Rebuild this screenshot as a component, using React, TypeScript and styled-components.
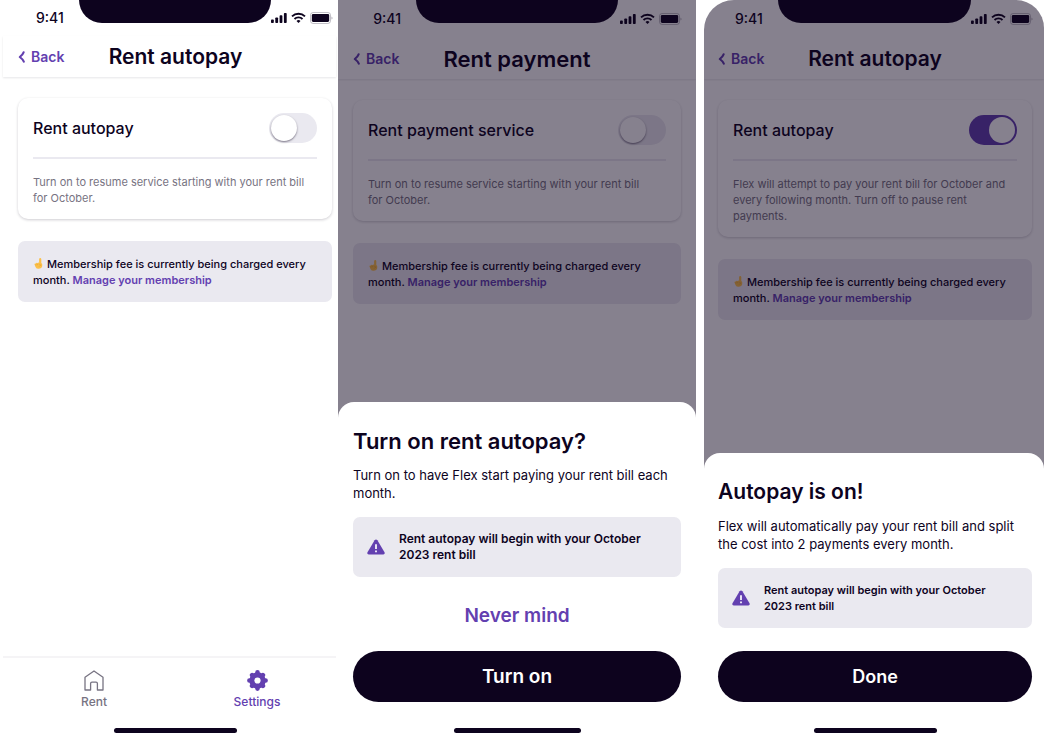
import React from "react";
import styled, { createGlobalStyle } from "styled-components";

const ink = "#0d031e";
const purple = "#6340b0";
const muted = "#777382";
const mist = "#eae9f0";

const GlobalStyle = createGlobalStyle`
  *, *::before, *::after { box-sizing: border-box; }
  body {
    margin: 0;
    background: #fff;
    color: ${ink};
    font-family: Inter, "Liberation Sans", sans-serif;
  }
  h1, h2, h3, p { margin: 0; }
  button { font-family: inherit; border: 0; cursor: pointer; }
`;

const Stage = styled.div`
  display: grid;
  grid-template-columns: 338fr 358fr 348fr;
  min-height: 100vh;
`;

const Phone = styled.section<{ $kind: "first" | "middle" | "last" }>`
  position: relative;
  display: flex;
  flex-direction: column;
  overflow: hidden;
  background: #fff;
  margin-left: ${(p) => (p.$kind === "last" ? "8px" : "0")};
  border-radius: ${(p) => (p.$kind === "last" ? "30px 28px 0 0" : "0")};
`;

const StatusBar = styled.div<{ $columns: string; $height: number }>`
  display: grid;
  grid-template-columns: ${(p) => p.$columns};
  height: ${(p) => p.$height}px;
`;

const Time = styled.span`
  align-self: center;
  justify-self: end;
  padding-right: 15px;
  font-size: 14px;
  line-height: 16px;
  font-weight: 500;
`;

const Notch = styled.div`
  height: 23px;
  border-radius: 0 0 24px 24px;
  background: ${ink};
`;

const Signals = styled.div<{ $end: number }>`
  display: flex;
  align-items: center;
  align-self: center;
  justify-content: flex-end;
  gap: 4px;
  padding-right: ${(p) => p.$end}px;
  svg { display: block; flex: none; }
`;

const Header = styled.header<{ $inset?: boolean; $lead: number }>`
  display: grid;
  align-items: center;
  height: 41px;
  margin: ${(p) => (p.$inset ? "0 2px 0 3px" : "0")};
  padding-left: ${(p) => p.$lead}px;
  box-shadow: 0 1px 2px rgba(13, 3, 30, 0.1);
  > * { grid-area: 1 / 1; }
`;

const Back = styled.button`
  display: flex;
  align-items: center;
  justify-self: start;
  gap: 5px;
  padding: 0;
  background: none;
  color: ${purple};
  font-size: 14px;
  line-height: 20px;
  font-weight: 600;
`;

const ScreenTitle = styled.h1<{ $lead: number; $large?: boolean }>`
  justify-self: center;
  padding-right: ${(p) => p.$lead}px;
  font-size: ${(p) => (p.$large ? 22 : 21)}px;
  line-height: 28px;
  font-weight: 600;
`;

const Content = styled.main<{ $left: number; $right: number }>`
  display: flex;
  flex-direction: column;
  flex: 1;
  gap: 22px;
  padding: 21px ${(p) => p.$right}px 0 ${(p) => p.$left}px;
`;

const Card = styled.div`
  padding: 15px 15px 13px;
  border-radius: 10px;
  background: #fff;
  box-shadow: 0 1px 3px rgba(13, 3, 30, 0.2);
`;

const CardRow = styled.label`
  display: flex;
  align-items: center;
  justify-content: space-between;
  padding-bottom: 14px;
  border-bottom: 2px solid ${mist};
  font-size: 16px;
  line-height: 20px;
  font-weight: 500;
`;

const Switch = styled.input`
  appearance: none;
  flex: none;
  width: 48px;
  height: 30px;
  margin: 0;
  padding: 2px;
  border-radius: 15px;
  background: ${mist};
  &::before {
    content: "";
    display: block;
    width: 26px;
    height: 26px;
    border-radius: 50%;
    background: #fff;
    box-shadow: 0 1px 2px rgba(13, 3, 30, 0.5);
  }
  &:checked { background: ${purple}; }
  &:checked::before { margin-left: auto; box-shadow: none; }
`;

const Hint = styled.p`
  padding: 15px 10px 0 0;
  color: ${muted};
  font-size: 11px;
  line-height: 16px;
`;

const Banner = styled.p`
  padding: 15px 15px 14px;
  border-radius: 7px;
  background: ${mist};
  font-size: 11px;
  line-height: 16px;
  font-weight: 500;
  svg { vertical-align: -1px; margin: 0 4px 0 1px; }
`;

const TextLink = styled.a`
  color: ${purple};
  font-weight: 600;
  text-decoration: none;
`;

const TabBar = styled.nav`
  display: grid;
  grid-template-columns: 1fr 1fr;
  column-gap: 5px;
  height: 72px;
  margin: 0 2px 0 3px;
  padding: 12px 0 0 12px;
  border-top: 2px solid #f5f4f6;
`;

const Tab = styled.a<{ $active?: boolean }>`
  display: flex;
  flex-direction: column;
  align-items: center;
  gap: 3px;
  color: ${(p) => (p.$active ? purple : muted)};
  font-size: 12px;
  line-height: 16px;
  font-weight: 500;
  text-decoration: none;
`;

const HomeBar = styled.div<{ $wide?: boolean }>`
  flex: none;
  align-self: center;
  width: ${(p) => (p.$wide ? 127 : 123)}px;
  height: 5px;
  border-radius: 3px;
  background: ${ink};
`;

const Foot = styled.footer`
  display: flex;
  flex-direction: column;
  padding: 0 0 13px 13px;
`;

const Scrim = styled.div`
  position: absolute;
  inset: 0;
  display: flex;
  flex-direction: column;
  justify-content: flex-end;
  background: rgba(13, 3, 30, 0.5);
`;

const Sheet = styled.div<{ $left: number; $right: number }>`
  display: flex;
  flex-direction: column;
  padding: 27px ${(p) => p.$right}px 13px ${(p) => p.$left}px;
  border-radius: 16px 16px 0 0;
  background: #fff;
`;

const SheetTitle = styled.h2<{ $large?: boolean }>`
  font-size: ${(p) => (p.$large ? 22 : 21)}px;
  line-height: 24px;
  font-weight: 600;
`;

const SheetText = styled.p`
  padding: 13px 0 15px;
  font-size: 13px;
  line-height: 18px;
`;

const Notice = styled.div<{ $large?: boolean }>`
  display: flex;
  align-items: center;
  gap: 14px;
  padding: 14px 28px 14px 14px;
  border-radius: 7px;
  background: ${mist};
  font-size: ${(p) => (p.$large ? 12 : 11)}px;
  line-height: 16px;
  font-weight: 600;
  svg { flex: none; }
`;

const Actions = styled.div<{ $top: number }>`
  display: flex;
  flex-direction: column;
  gap: 15px;
  padding: ${(p) => p.$top}px 0 26px;
`;

const Action = styled.button<{ $primary?: boolean; $large?: boolean }>`
  height: ${(p) => (p.$primary ? 51 : 40)}px;
  border-radius: 26px;
  background: ${(p) => (p.$primary ? ink : "none")};
  color: ${(p) => (p.$primary ? "#fff" : purple)};
  font-size: ${(p) => (p.$large ? 19 : 18)}px;
  line-height: 24px;
  font-weight: 600;
`;

const StatusIcons = ({ end }: { end: number }) => (
  <Signals $end={end}>
    <svg width="16" height="12" viewBox="0 0 16 12" fill={ink} aria-hidden="true">
      <rect x="0" y="7.5" width="2.8" height="3.5" rx="0.8" />
      <rect x="4.3" y="5.5" width="2.8" height="5.5" rx="0.8" />
      <rect x="8.6" y="3.3" width="2.8" height="7.7" rx="0.8" />
      <rect x="12.9" y="1" width="2.8" height="10" rx="0.8" />
    </svg>
    <svg width="15" height="12" viewBox="0 0 15 12" fill="none" stroke={ink} strokeWidth="1.9" aria-hidden="true">
      <path d="M1 4.4a9.3 9.3 0 0 1 13 0" />
      <path d="M3.5 7a5.7 5.7 0 0 1 8 0" />
      <path d="M7.5 11 5.5 9a2.8 2.8 0 0 1 4 0z" fill={ink} stroke="none" />
    </svg>
    <svg width="23" height="12" viewBox="0 0 23 12" aria-hidden="true">
      <rect x="0.5" y="0.5" width="20" height="11" rx="2.6" fill="none" stroke={ink} strokeOpacity="0.25" />
      <rect x="1.8" y="2" width="17.4" height="8" rx="1.4" fill={ink} />
      <path d="M21.5 4.4v3.2q1-.5 1-1.6t-1-1.6z" fill={ink} fillOpacity="0.35" />
    </svg>
  </Signals>
);

const Chevron = () => (
  <svg width="8" height="12" viewBox="0 0 8 12" fill="none" stroke={purple} strokeWidth="2.1" strokeLinecap="round" strokeLinejoin="round" aria-hidden="true">
    <path d="M5.6 1.3Q4.8 3.6 1.8 6q3 2.2 4 4.7" />
  </svg>
);

const Finger = () => (
  <svg width="9" height="11" viewBox="0 0 9 11" aria-hidden="true">
    <path d="M5.1 4.9V1.3Q5.2.1 6.2.1t1.1 1.2V5l.9.9v2.3q-.3 2.4-3.2 2.6-2.7.1-3.5-1.9L.5 6.6q-.2-1.2.8-1.2l.6.2q0-.9.9-.9t.9.5q.2-.8.9-.8t.5.5z" fill="#fbc04a" />
    <path d="M2.1 6.2v1.2M3.7 5.9v1.3M5.2 6.1q1.5.2 1.5 1.4-1.2.1-1.7 1.1" fill="none" stroke="#df9a2b" strokeWidth="0.5" />
  </svg>
);

const Warning = () => (
  <svg width="18" height="18" viewBox="0 0 18 18" aria-hidden="true">
    <path d="M7.6 2.3q1.4-1.7 2.8 0l7.1 12q.8 1.9-1.2 2.2H1.7q-2-.3-1.2-2.2z" fill={purple} />
    <path d="M9 6.3v4.8M9 12.6v1.7" stroke="#fff" strokeWidth="1.7" />
  </svg>
);

const House = () => (
  <svg width="20" height="21" viewBox="0 0 20 21" fill="none" stroke={muted} strokeWidth="1.3" strokeLinejoin="round" aria-hidden="true">
    <path d="M10 1 19 7.2V20h-5.6v-6.4q0-1.4-1.4-1.4H8q-1.4 0-1.4 1.4V20H1V7.2z" />
  </svg>
);

const Gear = () => (
  <svg width="21" height="21" viewBox="0 0 21 21" aria-hidden="true">
    <g stroke={purple} strokeWidth="4.6" strokeLinecap="round">
      <path d="M10.5 2.4v16.2M2.4 10.5h16.2M5.1 5.1l10.8 10.8M15.9 5.1 5.1 15.9" />
    </g>
    <circle cx="10.5" cy="10.5" r="8.2" fill={purple} />
    <circle cx="10.5" cy="10.5" r="3.1" fill="#fff" />
  </svg>
);

type SettingsProps = {
  setting: string;
  hint: string;
  on?: boolean;
  left: number;
  right: number;
};

const Settings = ({ setting, hint, on, left, right }: SettingsProps) => (
  <Content $left={left} $right={right}>
    <Card>
      <CardRow>
        {setting}
        <Switch type="checkbox" role="switch" defaultChecked={on} />
      </CardRow>
      <Hint>{hint}</Hint>
    </Card>
    <Banner>
      <Finger />
      <span>Membership fee is currently being charged every</span>{" "}
      <span>month.</span>{" "}
      <TextLink href="#membership">Manage your membership</TextLink>
    </Banner>
  </Content>
);

const BeginNotice = ({ large }: { large?: boolean }) => (
  <Notice role="note" $large={large}>
    <Warning />
    <span>Rent autopay will begin with your October 2023 rent bill</span>
  </Notice>
);

export default function App() {
  return (
    <>
      <GlobalStyle />
      <Stage>
        <Phone $kind="first">
          <StatusBar $columns="79fr 193fr 66fr" $height={36}>
            <Time>9:41</Time>
            <Notch />
            <StatusIcons end={5} />
          </StatusBar>
          <Header $inset $lead={15}>
            <Back><Chevron />Back</Back>
            <ScreenTitle $lead={3}>Rent autopay</ScreenTitle>
          </Header>
          <Settings
            setting="Rent autopay"
            hint="Turn on to resume service starting with your rent bill for October."
            left={18}
            right={6}
          />
          <TabBar>
            <Tab href="#rent"><House />Rent</Tab>
            <Tab href="#settings" $active><Gear />Settings</Tab>
          </TabBar>
          <Foot><HomeBar /></Foot>
        </Phone>

        <Phone $kind="middle">
          <StatusBar $columns="78fr 202fr 78fr" $height={38}>
            <Time>9:41</Time>
            <Notch />
            <StatusIcons end={14} />
          </StatusBar>
          <Header $lead={15}>
            <Back><Chevron />Back</Back>
            <ScreenTitle $lead={15} $large>Rent payment</ScreenTitle>
          </Header>
          <Settings
            setting="Rent payment service"
            hint="Turn on to resume service starting with your rent bill for October."
            left={15}
            right={15}
          />
          <Scrim>
            <Sheet $left={15} $right={15} role="dialog" aria-label="Turn on rent autopay?">
              <SheetTitle $large>Turn on rent autopay?</SheetTitle>
              <SheetText>Turn on to have Flex start paying your rent bill each month.</SheetText>
              <BeginNotice large />
              <Actions $top={19}>
                <Action $large>Never mind</Action>
                <Action $primary $large>Turn on</Action>
              </Actions>
              <HomeBar $wide />
            </Sheet>
          </Scrim>
        </Phone>

        <Phone $kind="last">
          <StatusBar $columns="74fr 194fr 72fr" $height={38}>
            <Time>9:41</Time>
            <Notch />
            <StatusIcons end={11} />
          </StatusBar>
          <Header $lead={14}>
            <Back><Chevron />Back</Back>
            <ScreenTitle $lead={12}>Rent autopay</ScreenTitle>
          </Header>
          <Settings
            setting="Rent autopay"
            hint="Flex will attempt to pay your rent bill for October and every following month. Turn off to pause rent payments."
            on
            left={14}
            right={12}
          />
          <Scrim>
            <Sheet $left={14} $right={12} role="dialog" aria-label="Autopay is on!">
              <SheetTitle>Autopay is on!</SheetTitle>
              <SheetText>Flex will automatically pay your rent bill and split the cost into 2 payments every month.</SheetText>
              <BeginNotice />
              <Actions $top={23}>
                <Action $primary>Done</Action>
              </Actions>
              <HomeBar />
            </Sheet>
          </Scrim>
        </Phone>
      </Stage>
    </>
  );
}
